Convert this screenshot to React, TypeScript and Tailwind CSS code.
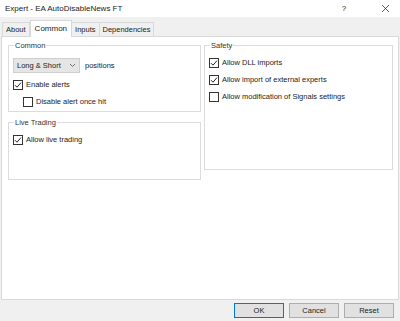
import { useState } from "react";

function Check({ checked, label }: { checked: boolean; label: string }) {
  return (
    <div className="flex items-center gap-[3px] h-[13px]">
      <div className="w-[10px] h-[10px] border border-[#333] bg-white flex items-center justify-center">
        {checked && (
          <svg width="8" height="8" viewBox="0 0 8 8">
            <path d="M1 4.2 L3 6.2 L7 1.6" fill="none" stroke="#222" strokeWidth="1" />
          </svg>
        )}
      </div>
      <span>{label}</span>
    </div>
  );
}

function Group({ title, className, children }: { title: string; className?: string; children: React.ReactNode }) {
  return (
    <div className={"relative border border-[#dcdcdc] " + (className ?? "")}>
      <span className="absolute -top-[6px] left-[5px] bg-white px-[1px] text-[#333] leading-[11px]">{title}</span>
      {children}
    </div>
  );
}

export default function App() {
  const [tab, setTab] = useState("Common");
  const tabs = ["About", "Common", "Inputs", "Dependencies"];

  return (
    <div className="w-[400px] h-[321px] bg-[#f0f0f0] flex flex-col text-[7.5px] text-[#222] font-['Liberation_Sans',sans-serif] overflow-hidden">
      <div className="h-[17px] bg-white flex items-center px-[5px] text-[8px]">
        <span className="flex-1">Expert - EA AutoDisableNews FT</span>
        <span className="w-[10px] text-center mr-[32px]">?</span>
        <svg width="9" height="9" viewBox="0 0 9 9" className="mr-[5px]">
          <path d="M1 1 L8 8 M8 1 L1 8" stroke="#333" strokeWidth="0.8" />
        </svg>
      </div>

      <div className="flex items-end h-[18px] px-[2px] mt-[1px]">
        {tabs.map((t) =>
          t === tab ? (
            <div
              key={t}
              onClick={() => setTab(t)}
              className="h-[17px] px-[4px] flex items-center bg-white border border-b-0 border-[#d9d9d9] -mb-[1px] relative z-10 text-[8px]"
            >
              {t}
            </div>
          ) : (
            <div
              key={t}
              onClick={() => setTab(t)}
              className="h-[14px] px-[3px] flex items-center bg-[#f0f0f0] border border-b-0 border-[#d9d9d9] -ml-[1px] first:ml-0 text-[7.5px]"
            >
              {t}
            </div>
          )
        )}
      </div>

      <div className="mx-[1px] h-[264px] bg-white border border-[#d9d9d9] grid grid-cols-[193px_189px] gap-[3px] pl-[6px] pt-[8px] items-start">
        <div className="flex flex-col gap-[10px]">
          <Group title="Common" className="h-[67px] pt-[12px] pl-[4px]">
            <div className="flex items-center gap-[5px]">
              <div className="w-[67px] h-[15px] bg-[#e5e5e5] border border-[#cfcfcf] flex items-center justify-between px-[3px]">
                <span>Long &amp; Short</span>
                <svg width="7" height="5" viewBox="0 0 7 5">
                  <path d="M1 1 L3.5 3.5 L6 1" fill="none" stroke="#555" strokeWidth="0.8" />
                </svg>
              </div>
              <span>positions</span>
            </div>
            <div className="mt-[5px]">
              <Check checked label="Enable alerts" />
            </div>
            <div className="mt-[4px] ml-[10px]">
              <Check checked={false} label="Disable alert once hit" />
            </div>
          </Group>
          <Group title="Live Trading" className="h-[58px] pt-[10px] pl-[4px]">
            <Check checked label="Allow live trading" />
          </Group>
        </div>

        <Group title="Safety" className="h-[125px] pt-[10px] pl-[4px]">
          <div className="flex flex-col gap-[4px]">
            <Check checked label="Allow DLL imports" />
            <Check checked label="Allow import of external experts" />
            <Check checked={false} label="Allow modification of Signals settings" />
          </div>
        </Group>
      </div>

      <div className="flex justify-end gap-[5px] pr-[6px] pt-[3px]">
        <button className="w-[50px] h-[15px] bg-[#e1e1e1] border border-[#0078d7] text-[7.5px]">OK</button>
        <button className="w-[50px] h-[15px] bg-[#e1e1e1] border border-[#adadad] text-[7.5px]">Cancel</button>
        <button className="w-[50px] h-[15px] bg-[#e1e1e1] border border-[#adadad] text-[7.5px]">Reset</button>
      </div>
    </div>
  );
}
